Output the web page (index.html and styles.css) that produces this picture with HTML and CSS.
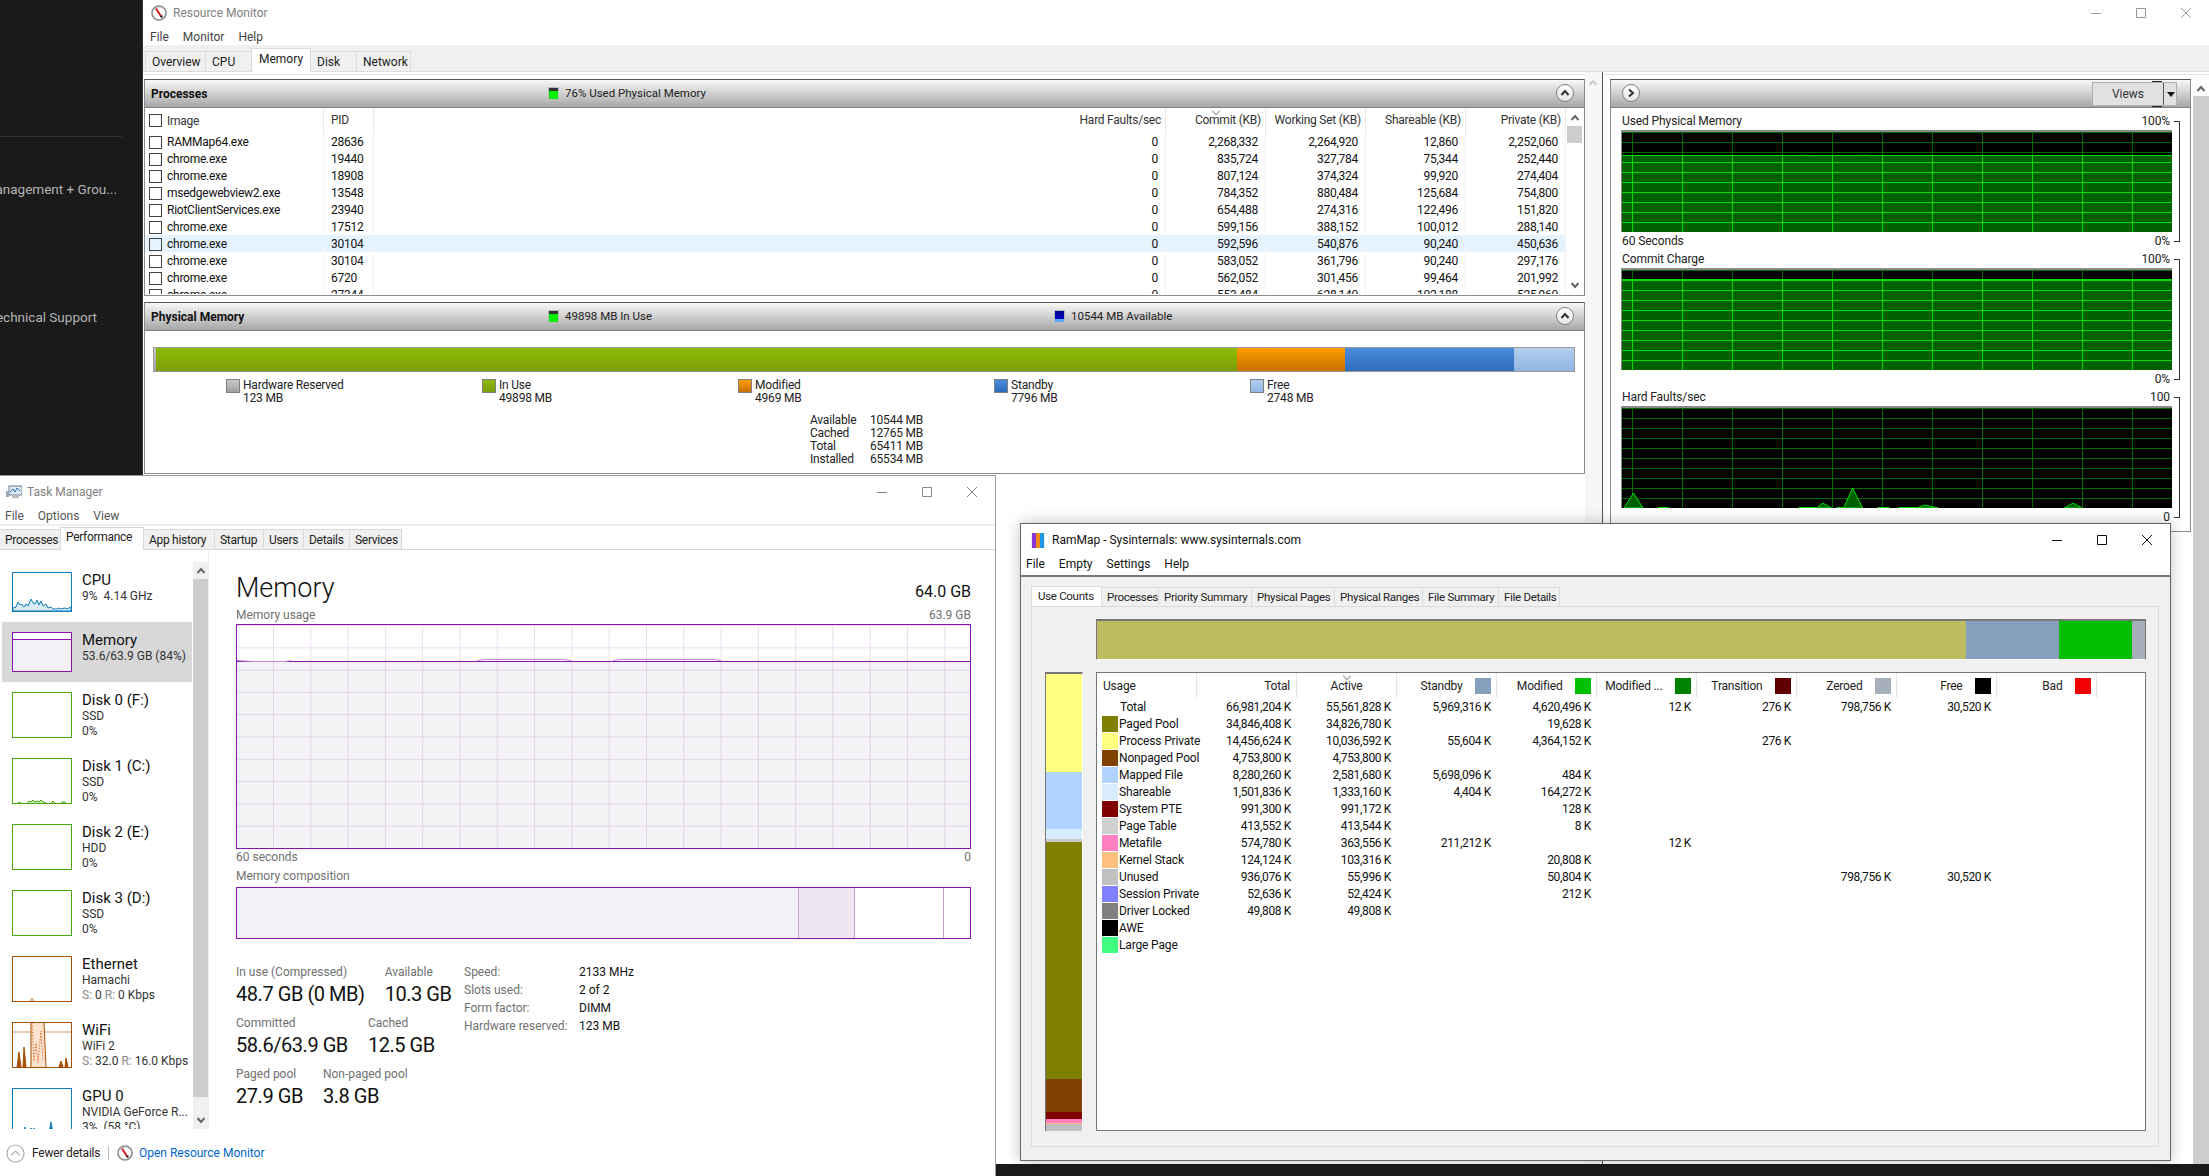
FILE: index.html
```html
<!DOCTYPE html>
<html lang="en">
<head>
    <meta charset="UTF-8">
    <meta name="viewport" content="width=device-width, initial-scale=1.0">
    <title>Memory windows</title>
    <link rel="stylesheet" href="styles.css">
</head>
<body>
    <svg class="defs" width="0" height="0">
        <symbol id="gauge" viewBox="0 0 16 16">
            <circle cx="8" cy="8" r="7" fill="#fff" stroke="#8a8a8a" stroke-width="1.6"/>
            <path d="M3.5 4.5 A6 6 0 0 1 12 3.4" fill="none" stroke="#c9c9c9"/>
            <path d="M5 3.5 L10.5 12" stroke="#d42020" stroke-width="2"/>
            <circle cx="10.5" cy="11.5" r="1.2" fill="#333"/>
        </symbol>
        <symbol id="chev-up" viewBox="0 0 10 10">
            <path d="M1.5 7 L5 3 L8.5 7" fill="none" stroke="currentColor" stroke-width="2"/>
        </symbol>
        <symbol id="chev-down" viewBox="0 0 10 10">
            <path d="M1.5 3 L5 7 L8.5 3" fill="none" stroke="currentColor" stroke-width="2"/>
        </symbol>
        <symbol id="chev-right" viewBox="0 0 10 10">
            <path d="M3 1.5 L7 5 L3 8.5" fill="none" stroke="currentColor" stroke-width="2"/>
        </symbol>
        <symbol id="win-min" viewBox="0 0 12 12"><path d="M1 6.5 H11" stroke="currentColor" fill="none"/></symbol>
        <symbol id="win-max" viewBox="0 0 12 12"><path d="M1.5 1.5 H10.5 V10.5 H1.5 Z" stroke="currentColor" fill="none"/></symbol>
        <symbol id="win-close" viewBox="0 0 12 12"><path d="M1 1 L11 11 M11 1 L1 11" stroke="currentColor" fill="none"/></symbol>
    </svg>

    <div class="dock">
        <hr class="dock-line">
        <div class="dock-item first"><span>Management + Grou...</span></div>
        <div class="dock-item second"><span>Technical Support</span></div>
    </div>

    <!-- resource monitor -->
    <section class="window rm">
        <div class="rm-title">
            <svg class="rm-icon"><use href="#gauge"/></svg>
            <span>Resource Monitor</span>
            <div class="rm-controls">
                <svg><use href="#win-min"/></svg>
                <svg><use href="#win-max"/></svg>
                <svg><use href="#win-close"/></svg>
            </div>
        </div>
        <div class="rm-menu"><span>File</span><span>Monitor</span><span>Help</span></div>
        <div class="rm-tabs">
            <span class="rm-tab w60">Overview</span>
            <span class="rm-tab w47">CPU</span>
            <span class="rm-tab w59 active">Memory</span>
            <span class="rm-tab w47">Disk</span>
            <span class="rm-tab w54">Network</span>
        </div>
        <div class="rm-body">
            <div class="rm-left">
                <div class="panel processes">
                    <div class="panel-head">
                        <h3>Processes</h3>
                        <span class="key key-used"><i class="key-green"></i>76% Used Physical Memory</span>
                        <button class="round-btn"><svg><use href="#chev-up"/></svg></button>
                    </div>
                    <div class="proc-wrap">
                        <div class="proc-table">
                            <div class="proc-row proc-head">
                                <span class="cell"><i class="chk"></i>Image</span><span class="cell">PID</span><span class="cell num">Hard Faults/sec</span>
                                <span class="cell num sorted">Commit (KB)</span><span class="cell num">Working Set (KB)</span><span class="cell num">Shareable (KB)</span><span class="cell num">Private (KB)</span>
                            </div>
                            <div class="proc-row"><span class="cell"><i class="chk"></i>RAMMap64.exe</span><span class="cell">28636</span><span class="cell num">0</span><span class="cell num">2,268,332</span><span class="cell num">2,264,920</span><span class="cell num">12,860</span><span class="cell num">2,252,060</span></div>
                            <div class="proc-row"><span class="cell"><i class="chk"></i>chrome.exe</span><span class="cell">19440</span><span class="cell num">0</span><span class="cell num">835,724</span><span class="cell num">327,784</span><span class="cell num">75,344</span><span class="cell num">252,440</span></div>
                            <div class="proc-row"><span class="cell"><i class="chk"></i>chrome.exe</span><span class="cell">18908</span><span class="cell num">0</span><span class="cell num">807,124</span><span class="cell num">374,324</span><span class="cell num">99,920</span><span class="cell num">274,404</span></div>
                            <div class="proc-row"><span class="cell"><i class="chk"></i>msedgewebview2.exe</span><span class="cell">13548</span><span class="cell num">0</span><span class="cell num">784,352</span><span class="cell num">880,484</span><span class="cell num">125,684</span><span class="cell num">754,800</span></div>
                            <div class="proc-row"><span class="cell"><i class="chk"></i>RiotClientServices.exe</span><span class="cell">23940</span><span class="cell num">0</span><span class="cell num">654,488</span><span class="cell num">274,316</span><span class="cell num">122,496</span><span class="cell num">151,820</span></div>
                            <div class="proc-row"><span class="cell"><i class="chk"></i>chrome.exe</span><span class="cell">17512</span><span class="cell num">0</span><span class="cell num">599,156</span><span class="cell num">388,152</span><span class="cell num">100,012</span><span class="cell num">288,140</span></div>
                            <div class="proc-row hover"><span class="cell"><i class="chk"></i>chrome.exe</span><span class="cell">30104</span><span class="cell num">0</span><span class="cell num">592,596</span><span class="cell num">540,876</span><span class="cell num">90,240</span><span class="cell num">450,636</span></div>
                            <div class="proc-row"><span class="cell"><i class="chk"></i>chrome.exe</span><span class="cell">30104</span><span class="cell num">0</span><span class="cell num">583,052</span><span class="cell num">361,796</span><span class="cell num">90,240</span><span class="cell num">297,176</span></div>
                            <div class="proc-row"><span class="cell"><i class="chk"></i>chrome.exe</span><span class="cell">6720</span><span class="cell num">0</span><span class="cell num">562,052</span><span class="cell num">301,456</span><span class="cell num">99,464</span><span class="cell num">201,992</span></div>
                            <div class="proc-row"><span class="cell"><i class="chk"></i>chrome.exe</span><span class="cell">27344</span><span class="cell num">0</span><span class="cell num">553,484</span><span class="cell num">628,140</span><span class="cell num">102,188</span><span class="cell num">525,960</span></div>
                        </div>
                        <div class="proc-scroll">
                            <svg class="sb-chev"><use href="#chev-up"/></svg>
                            <div class="proc-thumb"></div>
                            <svg class="sb-chev sb-bottom"><use href="#chev-down"/></svg>
                        </div>
                    </div>
                </div>

                <div class="panel physical">
                    <div class="panel-head">
                        <h3>Physical Memory</h3>
                        <span class="key key-used"><i class="key-green"></i>49898 MB In Use</span>
                        <span class="key key-avail"><i class="key-blue"></i>10544 MB Available</span>
                        <button class="round-btn"><svg><use href="#chev-up"/></svg></button>
                    </div>
                    <div class="phys-bar">
                        <i class="seg seg-hw"></i><i class="seg seg-use"></i><i class="seg seg-mod"></i><i class="seg seg-stand"></i><i class="seg seg-free"></i>
                    </div>
                    <div class="phys-legend">
                        <div class="legend"><i class="swatch seg-hw"></i><p>Hardware Reserved<br>123 MB</p></div>
                        <div class="legend"><i class="swatch seg-use"></i><p>In Use<br>49898 MB</p></div>
                        <div class="legend"><i class="swatch seg-mod"></i><p>Modified<br>4969 MB</p></div>
                        <div class="legend"><i class="swatch seg-stand"></i><p>Standby<br>7796 MB</p></div>
                        <div class="legend"><i class="swatch seg-free"></i><p>Free<br>2748 MB</p></div>
                    </div>
                    <div class="phys-totals">
                        <span>Available</span><span>10544 MB</span>
                        <span>Cached</span><span>12765 MB</span>
                        <span>Total</span><span>65411 MB</span>
                        <span>Installed</span><span>65534 MB</span>
                    </div>
                </div>
            </div>

            <div class="rm-gutter"><svg class="sb-chev"><use href="#chev-up"/></svg></div>

            <div class="panel graphs">
                <div class="panel-head">
                    <button class="round-btn round-left"><svg><use href="#chev-right"/></svg></button>
                    <div class="views"><span>Views</span><i class="views-arrow"></i></div>
                </div>
                <div class="graph-block">
                    <div class="graph-label"><span>Used Physical Memory</span><span>100%</span></div>
                    <div class="graph">
                        <div class="graph-fill fill-used"></div>
                        <svg class="graph-lines" viewBox="0 0 551 100" preserveAspectRatio="none"><path d="M175 24 L176 23.4 H186 L188 24 M235 24 L236 23.4 H246 L248 24" fill="none" stroke="#00e000"/></svg>
                    </div>
                    <div class="graph-label"><span>60 Seconds</span><span>0%</span></div>
                </div>
                <div class="graph-block">
                    <div class="graph-label"><span>Commit Charge</span><span>100%</span></div>
                    <div class="graph">
                        <div class="graph-fill fill-commit"></div>
                    </div>
                    <div class="graph-label"><span></span><span>0%</span></div>
                </div>
                <div class="graph-block">
                    <div class="graph-label"><span>Hard Faults/sec</span><span>100</span></div>
                    <div class="graph">
                        <svg class="graph-lines" viewBox="0 0 551 100" preserveAspectRatio="none">
                            <path d="M2 100 L11.5 85 L21 100 Z M195 100 L201 95 L210 100 Z M222 100 L231 80 L241 100 Z M295 100 L303 97 L317 100 Z M443 100 L452 95 L461 100 Z" fill="#006000" stroke="#00e000"/>
                            <path d="M36 99.5 H47 M177 99.5 H195 M215 99.5 H222 M256 99.5 H268 M277 99.5 H295" fill="none" stroke="#00e000"/>
                        </svg>
                    </div>
                    <div class="graph-label"><span></span><span>0</span></div>
                </div>
            </div>
            <div class="rm-scroll"><svg class="sb-chev"><use href="#chev-up"/></svg><div class="rm-thumb"></div></div>
        </div>
    </section>

    <!-- task manager -->
    <section class="window tm">
        <div class="tm-title">
            <svg class="tm-icon" viewBox="0 0 16 14">
                <rect x="3" y="1" width="13" height="9" fill="#dfeaf5" stroke="#6b7f93"/>
                <path d="M4 7 L7 4 L9 7 L11 3 L14 6" fill="none" stroke="#2a6fb0"/>
                <path d="M0 6 H3 V12 H0 Z" fill="#9aa7b4"/>
                <path d="M6 12 H13" stroke="#6b7f93"/>
            </svg>
            <span>Task Manager</span>
            <div class="tm-controls">
                <svg><use href="#win-min"/></svg>
                <svg><use href="#win-max"/></svg>
                <svg><use href="#win-close"/></svg>
            </div>
        </div>
        <div class="tm-menu"><span>File</span><span>Options</span><span>View</span></div>
        <div class="tm-tabs">
            <span class="tm-tab t61">Processes</span>
            <span class="tm-tab t83 active">Performance</span>
            <span class="tm-tab t71">App history</span>
            <span class="tm-tab t50">Startup</span>
            <span class="tm-tab t40">Users</span>
            <span class="tm-tab t47">Details</span>
            <span class="tm-tab t52">Services</span>
        </div>
        <div class="tm-body">
            <div class="tm-side">
                <div class="side-list">
                    <div class="side-item short">
                        <div class="thumb blue">
                            <svg viewBox="0 0 58 38" preserveAspectRatio="none"><path d="M0 38 V35 L3 34 L5 29 L7 32 L9 31 L11 34 L13 31 L15 33 L18 26 L20 30 L22 31 L24 27 L26 32 L28 28 L30 33 L33 31 L35 35 L38 34 L40 36 L44 36 L46 35 L48 36 L52 35 L54 36 L58 34 V38 Z" fill="#d9ebf5" stroke="#117dbb"/></svg>
                        </div>
                        <div class="side-text"><b>CPU</b><p>9%&nbsp; 4.14 GHz</p></div>
                    </div>
                    <div class="side-item short selected">
                        <div class="thumb purple"><div class="thumb-mem"></div></div>
                        <div class="side-text"><b>Memory</b><p>53.6/63.9 GB (84%)</p></div>
                    </div>
                    <div class="side-item">
                        <div class="thumb green"></div>
                        <div class="side-text"><b>Disk 0 (F:)</b><p>SSD</p><p>0%</p></div>
                    </div>
                    <div class="side-item">
                        <div class="thumb green">
                            <svg viewBox="0 0 58 44" preserveAspectRatio="none"><path d="M5 44 L6 43 L8 44 M14 44 L16 42 L18 43 L20 41 L22 43 L24 42 L26 43 L28 41 L30 43 L33 44 M38 44 L40 42 L42 44 M48 44 L49 43 L52 43 L53 44" fill="#cfe8b8" stroke="#4da60c"/></svg>
                        </div>
                        <div class="side-text"><b>Disk 1 (C:)</b><p>SSD</p><p>0%</p></div>
                    </div>
                    <div class="side-item">
                        <div class="thumb green"></div>
                        <div class="side-text"><b>Disk 2 (E:)</b><p>HDD</p><p>0%</p></div>
                    </div>
                    <div class="side-item">
                        <div class="thumb green"></div>
                        <div class="side-text"><b>Disk 3 (D:)</b><p>SSD</p><p>0%</p></div>
                    </div>
                    <div class="side-item">
                        <div class="thumb orange">
                            <svg viewBox="0 0 58 44" preserveAspectRatio="none"><path d="M17 44 L19 41 L21 44" fill="#fbe3cf" stroke="#a74f01" stroke-width=".6"/></svg>
                        </div>
                        <div class="side-text"><b>Ethernet</b><p>Hamachi</p><p><em>S:</em> 0 <em>R:</em> 0 Kbps</p></div>
                    </div>
                    <div class="side-item">
                        <div class="thumb orange">
                            <svg viewBox="0 0 58 44" preserveAspectRatio="none">
                                <path d="M0 9 H58" stroke="#cf9a6d" fill="none"/>
                                <path d="M17 44 L18 0 H31 L33 44 Z" fill="#fbe3cf"/>
                                <path d="M4 44 L6 29 L8 44 M10 44 L11 24 L13 44 M18 44 L18 0 M31 0 L33 44 M46 44 L48 38 L50 44 M52 44 L53 35 L55 44" fill="#a74f01" stroke="#a74f01"/>
                                <path d="M19 0 L21 38 L23 20 L25 40 L28 8 L30 38" fill="none" stroke="#e0703a" stroke-dasharray="1.5 1.5"/>
                            </svg>
                        </div>
                        <div class="side-text"><b>WiFi</b><p>WiFi 2</p><p><em>S:</em> 32.0 <em>R:</em> 16.0 Kbps</p></div>
                    </div>
                    <div class="side-item">
                        <div class="thumb blue">
                            <svg viewBox="0 0 58 44" preserveAspectRatio="none"><path d="M11 44 L12 38 L13 44 M17 44 L18 39 L19 44 M20 44 L21 39 L22 44 M24 44 L25 40 L26 44 M36 44 L38 33 L40 44" fill="#117dbb" stroke="#117dbb"/></svg>
                        </div>
                        <div class="side-text"><b>GPU 0</b><p>NVIDIA GeForce R...</p><p>3%&nbsp; (58 °C)</p></div>
                    </div>
                </div>
                <div class="side-scroll">
                    <svg class="sb-chev"><use href="#chev-up"/></svg>
                    <div class="side-thumb"></div>
                    <svg class="sb-chev sb-bottom"><use href="#chev-down"/></svg>
                </div>
            </div>
            <div class="tm-main">
                <div class="main-head"><h1>Memory</h1><span>64.0 GB</span></div>
                <div class="main-cap"><span>Memory usage</span><span>63.9 GB</span></div>
                <div class="usage-chart">
                    <div class="usage-fill"></div>
                    <svg class="usage-line" viewBox="0 0 733 40" preserveAspectRatio="none"><path d="M0 35.5 L16 36.5 H48 L54 35.5 M240 35.5 L248 34.5 H326 L334 35.5 M376 35.5 L384 34.5 H476 L484 35.5" fill="none" stroke="#c48ad8"/></svg>
                </div>
                <div class="main-cap cap-under"><span>60 seconds</span><span>0</span></div>
                <div class="main-cap cap-comp"><span>Memory composition</span></div>
                <div class="comp-box">
                    <i class="comp comp-use"></i><i class="comp comp-mod"></i><i class="comp comp-stand"></i><i class="comp comp-free"></i>
                </div>
                <div class="stats">
                    <div class="stats-left">
                        <div class="stat-row">
                            <div class="stat"><label>In use (Compressed)</label><strong>48.7 GB (0 MB)</strong></div>
                            <div class="stat"><label>Available</label><strong>10.3 GB</strong></div>
                        </div>
                        <div class="stat-row">
                            <div class="stat"><label>Committed</label><strong>58.6/63.9 GB</strong></div>
                            <div class="stat"><label>Cached</label><strong>12.5 GB</strong></div>
                        </div>
                        <div class="stat-row">
                            <div class="stat"><label>Paged pool</label><strong>27.9 GB</strong></div>
                            <div class="stat"><label>Non-paged pool</label><strong>3.8 GB</strong></div>
                        </div>
                    </div>
                    <div class="specs">
                        <label>Speed:</label><span>2133 MHz</span>
                        <label>Slots used:</label><span>2 of 2</span>
                        <label>Form factor:</label><span>DIMM</span>
                        <label>Hardware reserved:</label><span>123 MB</span>
                    </div>
                </div>
            </div>
        </div>
        <div class="tm-foot">
            <svg class="foot-circle" viewBox="0 0 20 20">
                <circle cx="10" cy="10" r="9" fill="#fff" stroke="#aaa" stroke-width="1.2"/>
                <path d="M5.5 12 L10 7.5 L14.5 12" fill="none" stroke="#aaa" stroke-width="1.4"/>
            </svg>
            <span class="foot-less">Fewer details</span>
            <i class="foot-sep"></i>
            <svg class="foot-gauge"><use href="#gauge"/></svg>
            <a class="foot-link">Open Resource Monitor</a>
        </div>
    </section>

    <!-- rammap -->
    <section class="window rammap">
        <div class="rmap-title">
            <svg class="rmap-icon" viewBox="0 0 14 15">
                <rect width="14" height="15" fill="#e8f0f8"/>
                <rect x="1" y="0" width="4" height="15" fill="#8a35d8"/>
                <rect x="5" y="0" width="4" height="15" fill="#f08a18"/>
                <rect x="9" y="0" width="4" height="15" fill="#1e96e6"/>
            </svg>
            <span>RamMap - Sysinternals: www.sysinternals.com</span>
            <div class="rmap-controls">
                <svg><use href="#win-min"/></svg>
                <svg><use href="#win-max"/></svg>
                <svg><use href="#win-close"/></svg>
            </div>
        </div>
        <div class="rmap-menu"><span>File</span><span>Empty</span><span>Settings</span><span>Help</span></div>
        <div class="rmap-body">
            <div class="rmap-tabs">
                <span class="rmap-tab active m71">Use Counts</span>
                <span class="rmap-tab m57">Processes</span>
                <span class="rmap-tab m93">Priority Summary</span>
                <span class="rmap-tab m83">Physical Pages</span>
                <span class="rmap-tab m88">Physical Ranges</span>
                <span class="rmap-tab m76">File Summary</span>
                <span class="rmap-tab m61">File Details</span>
            </div>
            <div class="rmap-panel">
                <div class="top-bar">
                    <i class="b-active"></i><i class="b-standby"></i><i class="b-modified"></i><i class="b-zero"></i>
                </div>
                <div class="side-bar">
                    <i class="s1"></i><i class="s2"></i><i class="s3"></i><i class="s4"></i><i class="s5"></i><i class="s6"></i><i class="s7"></i><i class="s8"></i><i class="s9"></i><i class="s10"></i>
                </div>
                <div class="use-table">
                    <div class="use-head">
                        <span class="h-cell left">Usage</span>
                        <span class="h-cell right">Total</span>
                        <span class="h-cell center sorted">Active</span>
                        <span class="h-cell">Standby<i class="k k-standby"></i></span>
                        <span class="h-cell">Modified<i class="k k-modified"></i></span>
                        <span class="h-cell">Modified ...<i class="k k-nowrite"></i></span>
                        <span class="h-cell">Transition<i class="k k-trans"></i></span>
                        <span class="h-cell">Zeroed<i class="k k-zero"></i></span>
                        <span class="h-cell">Free<i class="k k-free"></i></span>
                        <span class="h-cell">Bad<i class="k k-bad"></i></span>
                    </div>
                    <div class="use-row"><span class="name plain">Total</span><span>66,981,204 K</span><span>55,561,828 K</span><span>5,969,316 K</span><span>4,620,496 K</span><span>12 K</span><span>276 K</span><span>798,756 K</span><span>30,520 K</span></div>
                    <div class="use-row"><span class="name"><i class="c-paged"></i>Paged Pool</span><span>34,846,408 K</span><span>34,826,780 K</span><span></span><span>19,628 K</span></div>
                    <div class="use-row"><span class="name"><i class="c-private"></i>Process Private</span><span>14,456,624 K</span><span>10,036,592 K</span><span>55,604 K</span><span>4,364,152 K</span><span></span><span>276 K</span></div>
                    <div class="use-row"><span class="name"><i class="c-nonpaged"></i>Nonpaged Pool</span><span>4,753,800 K</span><span>4,753,800 K</span></div>
                    <div class="use-row"><span class="name"><i class="c-mapped"></i>Mapped File</span><span>8,280,260 K</span><span>2,581,680 K</span><span>5,698,096 K</span><span>484 K</span></div>
                    <div class="use-row"><span class="name"><i class="c-share"></i>Shareable</span><span>1,501,836 K</span><span>1,333,160 K</span><span>4,404 K</span><span>164,272 K</span></div>
                    <div class="use-row"><span class="name"><i class="c-pte"></i>System PTE</span><span>991,300 K</span><span>991,172 K</span><span></span><span>128 K</span></div>
                    <div class="use-row"><span class="name"><i class="c-table"></i>Page Table</span><span>413,552 K</span><span>413,544 K</span><span></span><span>8 K</span></div>
                    <div class="use-row"><span class="name"><i class="c-meta"></i>Metafile</span><span>574,780 K</span><span>363,556 K</span><span>211,212 K</span><span></span><span>12 K</span></div>
                    <div class="use-row"><span class="name"><i class="c-stack"></i>Kernel Stack</span><span>124,124 K</span><span>103,316 K</span><span></span><span>20,808 K</span></div>
                    <div class="use-row"><span class="name"><i class="c-unused"></i>Unused</span><span>936,076 K</span><span>55,996 K</span><span></span><span>50,804 K</span><span></span><span></span><span>798,756 K</span><span>30,520 K</span></div>
                    <div class="use-row"><span class="name"><i class="c-session"></i>Session Private</span><span>52,636 K</span><span>52,424 K</span><span></span><span>212 K</span></div>
                    <div class="use-row"><span class="name"><i class="c-driver"></i>Driver Locked</span><span>49,808 K</span><span>49,808 K</span></div>
                    <div class="use-row"><span class="name"><i class="c-awe"></i>AWE</span></div>
                    <div class="use-row"><span class="name"><i class="c-large"></i>Large Page</span></div>
                </div>
            </div>
        </div>
    </section>
</body>
</html>
```

FILE: styles.css
```css
*{
    margin: 0;
    padding: 0;
    box-sizing: border-box;
    font-family: Roboto, "Liberation Sans", sans-serif;
}
html, body{
    width: 2209px;
    height: 1176px;
    overflow: hidden;
}
body{
    position: relative;
    background-color: #1a1a1a;
    font-size: 12px;
    color: #111;
}
i{
    display: block;
}
.defs{
    position: absolute;
}
.window{
    position: absolute;
    background-color: #fff;
}

/* dark stuff behind the windows */
.dock{
    position: absolute;
    left: 0;
    top: 0;
    width: 142px;
    height: 1176px;
}
.dock-line{
    width: 122px;
    margin-top: 136px;
    border: 0;
    border-top: 1px solid #333;
}
.dock-item{
    display: flex;
    justify-content: flex-end;
    width: 117px;
    height: 18px;
    overflow: hidden;
    white-space: nowrap;
    font-size: 13.5px;
    line-height: 18px;
    color: #b4b4b4;
}
.dock-item.first{
    margin-top: 43px;
}
.dock-item.second{
    width: 97px;
    margin-top: 110px;
}

/* resource monitor */
.rm{
    left: 142px;
    top: 0;
    width: 2067px;
    height: 1164px;
    display: flex;
    flex-direction: column;
    border-left: 1px solid #333;
    overflow: hidden;
}
.rm-title{
    flex: none;
    display: flex;
    align-items: center;
    height: 25px;
    padding-left: 8px;
    color: #808080;
}
.rm-icon{
    width: 16px;
    height: 16px;
    margin-right: 6px;
}
.rm-controls{
    display: flex;
    margin-left: auto;
    color: #999;
    padding-right: 17px;
    gap: 33px;
}
.rm-controls svg, .tm-controls svg, .rmap-controls svg{
    width: 12px;
    height: 12px;
}
.rm-menu{
    flex: none;
    display: flex;
    gap: 14px;
    height: 20px;
    padding-left: 7px;
    line-height: 24px;
    color: #444;
}
.rm-tabs{
    flex: none;
    display: flex;
    align-items: flex-end;
    height: 27px;
    padding-left: 3px;
    background-color: #f0f0f0;
    border-bottom: 1px solid #ddd;
}
.rm-tab{
    height: 20px;
    padding-left: 6px;
    border: 1px solid #dcdcdc;
    border-bottom: 0;
    margin-left: -1px;
    line-height: 20px;
    color: #222;
}
.rm-tab.active{
    height: 24px;
    margin-bottom: -1px;
    padding-left: 7px;
    background-color: #fff;
    line-height: 20px;
}
.w60{ width: 61px; }
.w47{ width: 47px; }
.w59{ width: 60px; }
.w54{ width: 55px; }
.rm-body{
    flex: 1;
    min-height: 0;
    display: flex;
    align-items: flex-start;
    padding: 7px 0 0 1px;
    background: linear-gradient(#fff 2px, #e4e4e4 2px, #e4e4e4 3px, #fff 3px);
}
.rm-left{
    width: 1441px;
}
.panel{
    border: 1px solid #8c8c8c;
    border-top-color: #555;
    background-color: #fff;
}
.panel-head{
    position: relative;
    display: flex;
    align-items: center;
    height: 28px;
    padding-left: 6px;
    background: linear-gradient(#f8f8f8, #dcdcdc 35%, #a6a6a6);
    border-bottom: 1px solid #808080;
}
.panel-head h3{
    font-size: 12px;
    font-weight: 700;
    color: #111;
}
.key{
    position: absolute;
    top: 7px;
    display: flex;
    align-items: center;
    gap: 6px;
    font-size: 11.5px;
    line-height: 13px;
    color: #222;
}
.key i{
    width: 11px;
    height: 13px;
    border: 1px solid #bbb;
}
.key-used{
    left: 403px;
}
.key-avail{
    left: 909px;
}
.key-green{
    background: linear-gradient(#333 0, #333 3px, #00f000 3px);
}
.key-blue{
    background: linear-gradient(#000090, #0000c0 75%, #60a8ff 75%);
}
.round-btn{
    position: absolute;
    right: 10px;
    top: 4px;
    width: 18px;
    height: 18px;
    border: 1px solid #808080;
    border-radius: 50%;
    background: linear-gradient(#fff, #e4e4e4);
    color: #333;
    display: flex;
    align-items: center;
    justify-content: center;
}
.round-btn svg{
    width: 10px;
    height: 10px;
}
.round-left{
    right: auto;
    left: 11px;
}
.processes{
    height: 217px;
}
.proc-wrap{
    display: flex;
    height: 186px;
    overflow: hidden;
}
.proc-table{
    width: 1422px;
}
.proc-row{
    display: grid;
    grid-template-columns: 179px 50px 792px 100px 100px 100px 100px;
    height: 17px;
    line-height: 18px;
}
.proc-row.hover{
    background-color: #e5f3ff;
}
.proc-head{
    height: 25px;
    line-height: 24px;
    color: #333;
}
.cell{
    display: flex;
    padding-left: 7px;
    border-right: 1px solid #f0f4f8;
    white-space: nowrap;
    letter-spacing: -.25px;
}
.cell:first-child{
    align-items: center;
    padding-left: 4px;
}
.num{
    justify-content: flex-end;
    padding-right: 7px;
    padding-left: 0;
}
.proc-head .cell{
    border-right-color: #e8e8e8;
}
.proc-head .num{
    padding-right: 4px;
}
.sorted{
    position: relative;
}
.sorted::before{
    content: "";
    position: absolute;
    left: 50%;
    top: 0;
    width: 5px;
    height: 5px;
    margin-left: -3px;
    border-right: 1px solid #999;
    border-bottom: 1px solid #999;
    transform: rotate(45deg);
}
.chk{
    flex: none;
    width: 13px;
    height: 13px;
    margin-right: 5px;
    border: 1px solid #444;
}
.proc-scroll, .rm-scroll, .side-scroll{
    position: relative;
    color: #666;
}
.proc-scroll{
    width: 18px;
    padding: 5px 0 0 4px;
}
.sb-chev{
    display: block;
    width: 10px;
    height: 10px;
}
.sb-bottom{
    position: absolute;
    bottom: 4px;
}
.proc-thumb{
    width: 15px;
    height: 17px;
    margin: 3px 0 0 -3px;
    background-color: #cdcdcd;
}
.physical{
    height: 172px;
    margin-top: 6px;
}
.phys-bar{
    display: flex;
    height: 25px;
    margin: 16px 9px 0 8px;
    border: 1px solid #999;
}
.seg-hw{ width: 2px; background: linear-gradient(#c8c8c8, #a0a0a0); }
.seg-use{ width: 1081px; background: linear-gradient(#8cba08, #7c9e04); }
.seg-mod{ width: 108px; background: linear-gradient(#ff9c00, #c87000); }
.seg-stand{ width: 169px; background: linear-gradient(#4a8cdc, #2f6cbc); }
.seg-free{ flex: 1; background: linear-gradient(#b4cfee, #90b4e2); }
.phys-legend{
    display: grid;
    grid-template-columns: repeat(5, 256px);
    margin: 7px 0 0 81px;
}
.legend{
    display: flex;
    gap: 3px;
    line-height: 13px;
    color: #222;
    letter-spacing: -.2px;
}
.swatch{
    flex: none;
    width: 14px;
    height: 14px;
    border: 1px solid #808080;
}
.phys-totals{
    display: grid;
    grid-template-columns: 60px auto;
    width: 130px;
    margin: 9px 0 0 665px;
    line-height: 13px;
    color: #222;
    letter-spacing: -.2px;
}
.rm-gutter{
    width: 18px;
    height: 1092px;
    margin: -7px 7px 0 0;
    padding: 6px 0 0 3px;
    background-color: #f6f6f6;
    border-right: 1px solid #555;
    color: #ccc;
}
.graphs{
    width: 581px;
    height: 453px;
}
.views{
    position: absolute;
    right: 13px;
    top: 2px;
    width: 85px;
    height: 24px;
    display: flex;
    align-items: center;
    background-color: #e1e1e1;
    border: 1px solid #adadad;
}
.views::before, .views::after{
    content: "";
    position: absolute;
    left: 59px;
    width: 10px;
    height: 1px;
    background-color: #222;
}
.views::before{
    top: -2px;
}
.views::after{
    bottom: -2px;
}
.views span{
    width: 71px;
    text-align: center;
    border-right: 1px solid #555;
    line-height: 22px;
    color: #333;
}
.views-arrow{
    margin-left: 3px;
    border-left: 4px solid transparent;
    border-right: 4px solid transparent;
    border-top: 5px solid #111;
}
.graph-block{
    position: relative;
    height: 138px;
    padding: 0 18px 0 10px;
    top: 4px;
}
.graph-block::after{
    content: "";
    position: absolute;
    top: 9px;
    bottom: 8px;
    right: 10px;
    width: 5px;
    border: 1px solid #333;
    border-left: 0;
}
.graph-label{
    display: flex;
    justify-content: space-between;
    height: 18px;
    padding: 0 2px 0 1px;
    line-height: 18px;
    color: #222;
    letter-spacing: -.1px;
}
.graph{
    position: relative;
    display: flex;
    align-items: flex-end;
    height: 102px;
    border-top: 2px solid #8a8a8a;
    border-left: 1px solid #8a8a8a;
    background-color: #000;
    background-image: linear-gradient(to right, #006c00 1px, transparent 1px), linear-gradient(to top, transparent 9px, #006c00 9px);
    background-size: 50px 100%, 100% 10px;
    background-position: 10px 0, 0 bottom;
}
.graph-fill{
    width: 100%;
    background-color: #006000;
    background-image: linear-gradient(to right, #00d800 1px, transparent 1px), linear-gradient(to top, transparent 9px, #00d800 9px);
    background-size: 50px 100%, 100% 10px;
    background-position: 10px 0, 0 bottom;
    border-top: 1px solid #00e000;
}
.fill-used{
    height: 77px;
}
.fill-commit{
    height: 91px;
}
.graph-lines{
    position: absolute;
    inset: 0;
    width: 100%;
    height: 100%;
}
.rm-scroll{
    width: 16px;
    height: 1085px;
    margin: 0 0 0 2px;
    padding: 5px 0 0 3px;
}
.rm-thumb{
    width: 16px;
    height: 1072px;
    margin: 2px 0 0 -3px;
    background-color: #cdcdcd;
}

/* task manager */
.tm{
    left: 0;
    top: 475px;
    width: 996px;
    height: 701px;
    display: flex;
    flex-direction: column;
    border-top: 1px solid #999;
    border-right: 1px solid #9a9a9a;
}
.tm-title{
    display: flex;
    align-items: center;
    height: 31px;
    padding-left: 6px;
    color: #808080;
}
.tm-icon{
    width: 16px;
    height: 14px;
    margin-right: 5px;
}
.tm-controls{
    display: flex;
    gap: 33px;
    margin-left: auto;
    padding-right: 17px;
    color: #888;
}
.tm-menu{
    display: flex;
    gap: 14px;
    height: 19px;
    padding-left: 5px;
    line-height: 19px;
    color: #555;
    border-bottom: 2px solid #f0f0f0;
}
.tm-tabs{
    display: flex;
    align-items: flex-end;
    height: 24px;
    border-bottom: 1px solid #d9d9d9;
}
.tm-tab{
    height: 20px;
    padding-left: 5px;
    background-color: #f0f0f0;
    border: 1px solid #d9d9d9;
    border-bottom: 0;
    margin-left: -1px;
    line-height: 20px;
    color: #222;
    white-space: nowrap;
    letter-spacing: -.3px;
}
.tm-tab.active{
    height: 23px;
    margin-bottom: -1px;
    background-color: #fff;
    line-height: 18px;
}
.t61{ width: 62px; }
.t83{ width: 84px; }
.t71{ width: 72px; }
.t50{ width: 50px; }
.t40{ width: 41px; }
.t47{ width: 47px; }
.t52{ width: 53px; }
.tm-body{
    flex: 1;
    display: flex;
    min-height: 0;
}
.tm-side{
    display: flex;
    flex: none;
    width: 209px;
    height: 579px;
    padding-top: 12px;
    border-right: 1px solid #f0f0f0;
}
.side-list{
    width: 193px;
    height: 567px;
    overflow: hidden;
}
.side-item{
    display: flex;
    width: 190px;
    height: 66px;
    margin-left: 2px;
    padding: 10px 0 0 10px;
}
.side-item.short{
    height: 60px;
}
.side-item.selected{
    background-color: #d8d8d8;
}
.thumb{
    flex: none;
    position: relative;
    width: 60px;
    height: 46px;
    background-color: #fff;
    border: 1px solid;
    margin-right: 10px;
}
.short .thumb{
    height: 40px;
}
.thumb svg{
    position: absolute;
    inset: 0;
    width: 100%;
    height: 100%;
}
.thumb.blue{ border-color: #117dbb; }
.thumb.purple{ border-color: #8b12ae; }
.thumb.green{ border-color: #4da60c; }
.thumb.orange{ border-color: #a74f01; }
.thumb-mem{
    height: 32px;
    margin-top: 6px;
    background-color: #f3f1f5;
    border-top: 1px solid #8b12ae;
}
.side-text{
    margin-top: -1.5px;
    white-space: nowrap;
}
.side-text b{
    display: block;
    font-size: 15px;
    font-weight: 400;
    line-height: 18px;
    color: #111;
}
.side-text p{
    line-height: 15.3px;
    color: #333;
}
.side-text em{
    font-style: normal;
    color: #888;
}
.side-scroll{
    width: 15px;
    height: 567px;
    background-color: #f0f0f0;
    padding: 4px 0 0 3px;
}
.side-thumb{
    width: 15px;
    height: 518px;
    margin: 3px 0 0 -3px;
    background-color: #cdcdcd;
}
.tm-main{
    flex: 1;
    padding: 19px 24px 0 27px;
}
.main-head{
    display: flex;
    justify-content: space-between;
    align-items: baseline;
    height: 38px;
}
.main-head h1{
    font-size: 27px;
    font-weight: 300;
    line-height: 38px;
    color: #111;
}
.main-head span{
    font-size: 16px;
    color: #111;
}
.main-cap{
    display: flex;
    justify-content: space-between;
    height: 17px;
    line-height: 17px;
    color: #707070;
}
.cap-under{
    height: 19px;
    line-height: 17px;
}
.cap-comp{
    height: 19px;
}
.usage-chart{
    position: relative;
    display: flex;
    align-items: flex-end;
    height: 225px;
    border: 1px solid #8b12ae;
    background-image: linear-gradient(to right, #ecdcf2 1px, transparent 1px), linear-gradient(to top, transparent 21.3px, #ecdcf2 21.3px);
    background-size: 37.3px 100%, 100% 22.3px;
    background-position: 36px 0, 0 bottom;
}
.usage-fill{
    width: 100%;
    height: 187px;
    background-color: rgba(90, 70, 120, .07);
    border-top: 1px solid #8b12ae;
}
.usage-line{
    position: absolute;
    left: 0;
    top: 0;
    width: 100%;
    height: 40px;
}
.comp-box{
    display: flex;
    height: 52px;
    border: 1px solid #8b12ae;
}
.comp-use{ width: 561px; background-color: #f3f1f5; }
.comp-mod{ width: 56px; background-color: #eee6f3; border-left: 1px solid #c8a0d8; }
.comp-stand{ width: 89px; border-left: 1px solid #c8a0d8; }
.comp-free{ flex: 1; border-left: 1px solid #c8a0d8; }
.stats{
    display: flex;
    margin-top: 25px;
}
.stats-left{
    width: 228px;
    flex: none;
}
.stat-row{
    display: flex;
    gap: 20px;
    height: 51px;
}
.stat label{
    display: block;
    line-height: 16px;
    color: #707070;
    white-space: nowrap;
}
.stat strong{
    display: block;
    font-size: 20px;
    font-weight: 400;
    line-height: 28px;
    color: #111;
    white-space: nowrap;
    letter-spacing: -.45px;
}
.specs{
    display: grid;
    grid-template-columns: 115px auto;
    grid-auto-rows: 18px;
    line-height: 16px;
}
.specs label{
    color: #707070;
}
.tm-foot{
    display: flex;
    align-items: center;
    height: 34px;
    margin-bottom: 6px;
    padding-left: 6px;
}
.foot-circle{
    flex: none;
    width: 19px;
    height: 19px;
}
.foot-less{
    width: 83px;
    padding-left: 7px;
    color: #222;
    letter-spacing: -.2px;
}
.foot-sep{
    width: 1px;
    height: 14px;
    margin: 0 8px 0 0;
    background-color: #bbb;
}
.foot-gauge{
    flex: none;
    width: 16px;
    height: 16px;
    margin-right: 6px;
}
.foot-link{
    color: #0066cc;
}

/* rammap */
.rammap{
    left: 1020px;
    top: 523px;
    width: 1151px;
    height: 638px;
    display: flex;
    flex-direction: column;
    border: 1px solid #666;
    box-shadow: 0 0 14px rgba(0, 0, 0, .25);
}
.rmap-title{
    display: flex;
    align-items: center;
    height: 32px;
    padding-left: 10px;
    color: #111;
}
.rmap-icon{
    width: 14px;
    height: 15px;
    margin-right: 7px;
}
.rmap-controls{
    display: flex;
    gap: 33px;
    margin-left: auto;
    padding-right: 17px;
    color: #111;
}
.rmap-menu{
    display: flex;
    gap: 14px;
    height: 19px;
    padding-left: 5px;
    line-height: 16px;
    color: #111;
}
.rmap-body{
    flex: 1;
    display: flex;
    flex-direction: column;
    padding: 10px 11px 13px 10px;
    background-color: #f0f0f0;
    border-top: 2px solid #777;
}
.rmap-tabs{
    display: flex;
    align-items: flex-end;
    height: 19px;
}
.rmap-tab{
    height: 19px;
    padding-left: 5px;
    border: 1px solid #dcdcdc;
    border-bottom: 0;
    margin-left: -1px;
    font-size: 11.5px;
    line-height: 19px;
    color: #222;
    white-space: nowrap;
    letter-spacing: -.3px;
}
.rmap-tab.active{
    height: 21px;
    margin: 0 0 -1px 0;
    padding-left: 6px;
    background-color: #fff;
    line-height: 19px;
}
.m71{ width: 71px; }
.m57{ width: 58px; }
.m93{ width: 94px; }
.m83{ width: 84px; }
.m88{ width: 89px; }
.m76{ width: 77px; }
.m61{ width: 62px; }
.rmap-panel{
    flex: 1;
    display: grid;
    grid-template-columns: 38px 1fr;
    grid-template-rows: 41px 1fr;
    column-gap: 13px;
    row-gap: 12px;
    padding: 12px 12px 15px 13px;
    border: 1px solid #dcdcdc;
    background-color: #f0f0f0;
}
.top-bar{
    grid-column: 2;
    display: flex;
    border: 1px solid #777;
    border-top-width: 2px;
    border-bottom-color: #fff;
}
.b-active{ width: 869px; background-color: #bdbc60; }
.b-standby{ width: 93px; background-color: #859fbc; }
.b-modified{ width: 73px; background-color: #00c000; }
.b-zero{ flex: 1; background-color: #a5b0bc; }
.side-bar{
    display: flex;
    flex-direction: column;
    border-top: 2px solid #777;
    border-left: 1px solid #777;
    border-right: 1px solid #fff;
}
.s1{ height: 98px; background-color: #ffff80; }
.s2{ height: 57px; background-color: #b0d4ff; }
.s3{ height: 10px; background-color: #d9ebff; }
.s4{ height: 3px; background-color: #c8c8c8; }
.s5{ height: 237px; background-color: #808000; }
.s6{ height: 33px; background-color: #804000; }
.s7{ height: 7px; background-color: #800000; }
.s8{ height: 4px; background-color: #ff80c0; }
.s9{ height: 1px; background-color: #ffc080; }
.s10{ flex: 1; background-color: #c0c0c0; }
.use-table{
    background-color: #fff;
    border: 1px solid #777;
    overflow: hidden;
}
.use-head, .use-row{
    display: grid;
    grid-template-columns: 100px repeat(9, 100px);
}
.use-head{
    height: 25px;
}
.h-cell{
    position: relative;
    display: flex;
    align-items: center;
    justify-content: flex-end;
    gap: 12.5px;
    padding-right: 5px;
    border-right: 1px solid #e4e4e4;
    white-space: nowrap;
    color: #222;
    letter-spacing: -.2px;
}
.h-cell.left{
    justify-content: flex-start;
    padding: 0 0 0 6px;
}
.h-cell.right{
    padding-right: 6px;
}
.h-cell.center{
    justify-content: center;
    padding: 0;
}
.k{
    flex: none;
    width: 16px;
    height: 16px;
}
.k-standby{ background-color: #859fbc; }
.k-modified{ background-color: #00c000; }
.k-nowrite{ background-color: #008000; }
.k-trans{ background-color: #600000; }
.k-zero{ background-color: #a5b0bc; }
.k-free{ background-color: #000; }
.k-bad{ background-color: #f00000; }
.use-row{
    height: 17px;
    line-height: 18px;
    text-align: right;
}
.use-row span{
    padding-right: 6px;
    white-space: nowrap;
    letter-spacing: -.35px;
}
.use-row .name{
    display: flex;
    align-items: center;
    gap: 1px;
    padding-left: 5px;
    padding-right: 0;
    text-align: left;
    letter-spacing: -.15px;
}
.use-row .name.plain{
    padding-left: 23px;
}
.name i{
    flex: none;
    width: 16px;
    height: 16px;
}
.c-paged{ background-color: #808000; }
.c-private{ background-color: #ffff80; }
.c-nonpaged{ background-color: #804000; }
.c-mapped{ background-color: #b0d4ff; }
.c-share{ background-color: #d9ebff; }
.c-pte{ background-color: #800000; }
.c-table{ background-color: #d0d0d0; }
.c-meta{ background-color: #ff80c0; }
.c-stack{ background-color: #ffc080; }
.c-unused{ background-color: #c0c0c0; }
.c-session{ background-color: #8080ff; }
.c-driver{ background-color: #808080; }
.c-awe{ background-color: #000; }
.c-large{ background-color: #40ff80; }
```
